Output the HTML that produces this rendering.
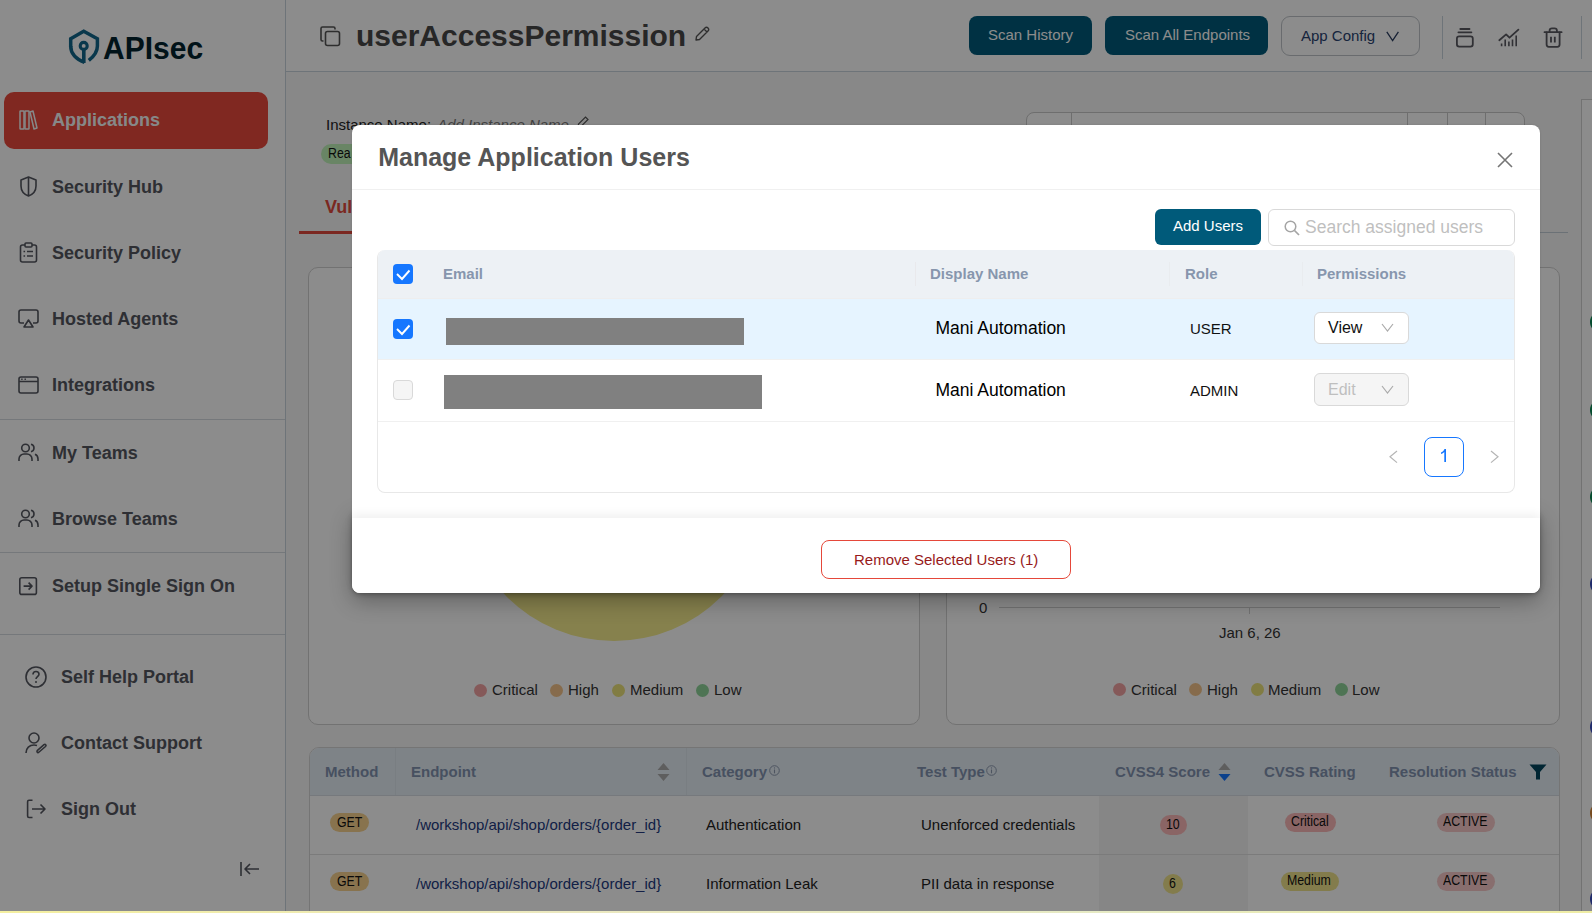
<!DOCTYPE html>
<html><head><meta charset="utf-8">
<style>
*{box-sizing:border-box;margin:0;padding:0}
html,body{width:1592px;height:913px;overflow:hidden;background:#f8f8f8;font-family:"Liberation Sans",sans-serif}
.a{position:absolute}
.t{position:absolute;line-height:1;white-space:nowrap}
.b{font-weight:bold}
svg{position:absolute;overflow:visible}
#sidebar{left:0;top:0;width:286px;height:913px;background:#fff;border-right:1px solid #c9d3dc}
#header{left:286px;top:0;width:1306px;height:72px;background:#fff;border-bottom:1px solid #c9d3dc}
.nav{color:#545760;font-size:18px;font-weight:bold}
.hr{position:absolute;height:1px;background:#d6dbe0}
.btn{position:absolute;border-radius:8px;background:#005a7a;color:#fff;font-size:15px}
.card{position:absolute;border:1px solid #cfcfcf;border-radius:10px;background:#fff}
.leg{font-size:15px;color:#333}
.dot{position:absolute;width:13px;height:13px;border-radius:50%}
#overlay{left:0;top:0;width:1592px;height:911px;background:rgba(0,0,0,0.45)}
#modal{left:352px;top:125px;width:1188px;height:468px;background:#fff;border-radius:8px;overflow:hidden;
 box-shadow:0 0 2px rgba(0,0,0,.15)}
.th{font-size:15px;font-weight:bold;color:#8796ad}
.cb{position:absolute;width:20px;height:20px;border-radius:4px;background:#1677ff}
.sx{transform:scaleX(0.88);transform-origin:0 0}
.cell{font-size:17.5px;color:#111}
</style></head><body>

<!-- ============ BACKGROUND PAGE ============ -->
<div id="sidebar" class="a">
  <!-- logo -->
  <svg style="left:62px;top:24px" width="44" height="44" viewBox="62 24 44 44">
    <path d="M70.7 47 V38.8 L83.7 31.2 L97.4 38.8 V46 C97.4 51.5 94.5 56 88.8 60.3" fill="none" stroke="#12668a" stroke-width="3.5" stroke-linejoin="miter"/>
    <path d="M70.7 46 C70.7 53.5 76 59 84.5 62.5" fill="none" stroke="#12668a" stroke-width="3.5"/>
    <circle cx="83.7" cy="45.9" r="3.5" fill="none" stroke="#12668a" stroke-width="3.1"/>
    <path d="M83.8 49 V63" stroke="#12668a" stroke-width="3.6"/>
  </svg>
  <div class="t b" style="left:103px;top:33.5px;font-size:30px;color:#03232f;transform:scaleY(1.06);transform-origin:0 25.5px">APIsec</div>

  <div class="a" style="left:4px;top:92px;width:264px;height:57px;border-radius:10px;background:#e9493c"></div>
  <svg style="left:19px;top:110px" width="19" height="20" viewBox="0 0 19 20">
    <rect x="1" y="1" width="4" height="18" rx="0.5" fill="none" stroke="#f4f8f8" stroke-width="1.5"/>
    <rect x="6" y="1" width="4" height="18" rx="0.5" fill="none" stroke="#f4f8f8" stroke-width="1.5"/>
    <path d="M11 2 L14 1 L18 18 L15 19 Z" fill="none" stroke="#f4f8f8" stroke-width="1.5" stroke-linejoin="round"/>
  </svg>
  <div class="t nav" style="left:52px;top:111px;color:#f4f8f8">Applications</div>

  <svg style="left:20px;top:176px" width="17" height="21" viewBox="0 0 17 21">
    <path d="M8.5 1 L16 4 V10 C16 15 12.5 18.5 8.5 20 C4.5 18.5 1 15 1 10 V4 Z M8.5 1 V20" fill="none" stroke="#545760" stroke-width="1.6" stroke-linejoin="round"/>
  </svg>
  <div class="t nav" style="left:52px;top:177.5px">Security Hub</div>

  <svg style="left:19px;top:242px" width="19" height="21" viewBox="0 0 19 21">
    <rect x="1.5" y="3" width="16" height="17" rx="2" fill="none" stroke="#545760" stroke-width="1.6"/>
    <rect x="6" y="1" width="7" height="4" rx="1" fill="#fff" stroke="#545760" stroke-width="1.6"/>
    <path d="M4.5 9.5h1.6M8 9.5h6M4.5 14h1.6M8 14h6" stroke="#545760" stroke-width="1.6"/>
  </svg>
  <div class="t nav" style="left:52px;top:243.5px">Security Policy</div>

  <svg style="left:18px;top:309px" width="21" height="19" viewBox="0 0 21 19">
    <path d="M6 14 H3 C2 14 1 13 1 12 V3 C1 2 2 1 3 1 H18 C19 1 20 2 20 3 V12 C20 13 19 14 18 14 H15" fill="none" stroke="#545760" stroke-width="1.6"/>
    <path d="M10.5 11 L15 18 H6 Z" fill="none" stroke="#545760" stroke-width="1.6" stroke-linejoin="round"/>
  </svg>
  <div class="t nav" style="left:52px;top:309.5px">Hosted Agents</div>

  <svg style="left:18px;top:376px" width="21" height="18" viewBox="0 0 21 18">
    <rect x="1" y="1" width="19" height="16" rx="2" fill="none" stroke="#545760" stroke-width="1.6"/>
    <path d="M1 5.5 H20 M3.2 3.3 H4.6 M6.5 3.3 H7.9" stroke="#545760" stroke-width="1.6"/>
  </svg>
  <div class="t nav" style="left:52px;top:375.5px">Integrations</div>
  <div class="hr" style="left:0;top:418.5px;width:285px"></div>

  <svg style="left:18px;top:443px" width="21" height="19" viewBox="0 0 21 19">
    <circle cx="7.5" cy="5" r="3.8" fill="none" stroke="#545760" stroke-width="1.6"/>
    <path d="M1 18 V16 C1 13 3.5 11 6 11 H9 C11.5 11 14 13 14 16 V18" fill="none" stroke="#545760" stroke-width="1.6"/>
    <path d="M13 1.3 C15 1.8 16 3.5 16 5 C16 6.5 15 8.2 13 8.7 M17 11.2 C19 12 20 14 20 16 V18" fill="none" stroke="#545760" stroke-width="1.6"/>
  </svg>
  <div class="t nav" style="left:52px;top:444px">My Teams</div>

  <svg style="left:18px;top:509px" width="21" height="19" viewBox="0 0 21 19">
    <circle cx="7.5" cy="5" r="3.8" fill="none" stroke="#545760" stroke-width="1.6"/>
    <path d="M1 18 V16 C1 13 3.5 11 6 11 H9 C11.5 11 14 13 14 16 V18" fill="none" stroke="#545760" stroke-width="1.6"/>
    <path d="M13 1.3 C15 1.8 16 3.5 16 5 C16 6.5 15 8.2 13 8.7 M17 11.2 C19 12 20 14 20 16 V18" fill="none" stroke="#545760" stroke-width="1.6"/>
  </svg>
  <div class="t nav" style="left:52px;top:510px">Browse Teams</div>
  <div class="hr" style="left:0;top:551.5px;width:285px"></div>

  <svg style="left:19px;top:576.5px" width="20" height="20" viewBox="0 0 20 20">
    <rect x="0.8" y="0.8" width="16.6" height="16.6" rx="2" fill="none" stroke="#545760" stroke-width="1.6"/>
    <path d="M4.6 9.1 H13 M9.6 5.6 L13 9.1 L9.6 12.6" fill="none" stroke="#545760" stroke-width="1.6" stroke-linejoin="round"/>
  </svg>
  <div class="t nav" style="left:52px;top:576.5px">Setup Single Sign On</div>
  <div class="hr" style="left:0;top:633.5px;width:285px"></div>

  <svg style="left:25px;top:666px" width="22" height="22" viewBox="0 0 22 22">
    <circle cx="11" cy="11" r="10" fill="none" stroke="#545760" stroke-width="1.6"/>
    <path d="M8 8.5 C8 6.5 9.5 5.5 11 5.5 C12.8 5.5 14 6.7 14 8.3 C14 10.5 11 10.8 11 13" fill="none" stroke="#545760" stroke-width="1.6"/>
    <circle cx="11" cy="16" r="1" fill="#545760"/>
  </svg>
  <div class="t nav" style="left:61px;top:668px">Self Help Portal</div>

  <svg style="left:25px;top:732px" width="23" height="22" viewBox="0 0 23 22">
    <circle cx="9" cy="6" r="5" fill="none" stroke="#545760" stroke-width="1.6"/>
    <path d="M1 21 C1 16 4.5 13 9 13 C10 13 11 13.2 12 13.5" fill="none" stroke="#545760" stroke-width="1.6"/>
    <path d="M13.5 20.5 L20.5 14.5 C21.8 13.3 20.3 11.6 19 12.7 L12.2 18.6 C11.6 19.6 12.3 20.9 13.5 20.5 Z" fill="none" stroke="#545760" stroke-width="1.6" stroke-linejoin="round"/>
  </svg>
  <div class="t nav" style="left:61px;top:734px">Contact Support</div>

  <svg style="left:25px;top:799px" width="22" height="20" viewBox="0 0 22 20">
    <path d="M7.5 1.3 H4 C3 1.3 2.6 1.8 2.6 2.8 V17 C2.6 18 3 18.5 4 18.5 H7.5" fill="none" stroke="#545760" stroke-width="1.6"/>
    <path d="M7 10 H20 M15.5 5.5 L20 10 L15.5 14.5" fill="none" stroke="#545760" stroke-width="1.6" stroke-linejoin="round"/>
  </svg>
  <div class="t nav" style="left:61px;top:800px">Sign Out</div>

  <svg style="left:240px;top:861px" width="20" height="16" viewBox="0 0 20 16">
    <path d="M1 1 V15 M19 8 H5 M10 3 L5 8 L10 13" fill="none" stroke="#545760" stroke-width="1.6" stroke-linejoin="round"/>
  </svg>
</div>

<div id="header" class="a">
</div>
<!-- header content (absolute page coords) -->
<svg style="left:320px;top:26px" width="21" height="21" viewBox="0 0 21 21">
  <rect x="5.5" y="5.5" width="14" height="14" rx="2" fill="none" stroke="#555" stroke-width="1.6"/>
  <path d="M3.5 15 H2.5 C1.7 15 1 14.3 1 13.5 V2.5 C1 1.7 1.7 1 2.5 1 H13.5 C14.3 1 15 1.7 15 2.5 V3.5" fill="none" stroke="#555" stroke-width="1.6"/>
</svg>
<div class="t b" style="left:356px;top:21px;font-size:30px;color:#474747">userAccessPermission</div>
<svg style="left:695px;top:26px" width="14" height="15" viewBox="0 0 14 15">
  <path d="M1 14 L1.5 10.5 L10 2 C11 1 12 1 13 2 C14 3 14 4 13 5 L4.5 13.5 Z M9 3 L12 6" fill="none" stroke="#555" stroke-width="1.4" stroke-linejoin="round"/>
</svg>

<div class="btn" style="left:969px;top:16px;width:123px;height:39px"><div class="t" style="left:19px;top:11px">Scan History</div></div>
<div class="btn" style="left:1105px;top:16px;width:163px;height:39px"><div class="t" style="left:20px;top:11px">Scan All Endpoints</div></div>
<div class="a" style="left:1281px;top:16px;width:139px;height:40px;border:1px solid #bfc4c9;border-radius:9px;background:#fff"></div>
<div class="t" style="left:1301px;top:28px;font-size:15px;color:#2a4270">App Config</div>
<svg style="left:1386px;top:31px" width="14" height="11" viewBox="0 0 14 11"><path d="M0.8 0.8 L6.6 9.6 L12.4 0.8" fill="none" stroke="#2a3d60" stroke-width="1.3"/></svg>
<div class="a" style="left:1442px;top:16px;width:1px;height:43px;background:#c9d3dc"></div>
<svg style="left:1440px;top:20px" width="140" height="40" viewBox="1440 20 140 40">
  <g fill="none" stroke="#5a5a62" stroke-width="1.8" stroke-linecap="round" stroke-linejoin="round">
  <path d="M1460.3 29 H1469.5 M1458.4 32.3 H1471.4"/>
  <rect x="1456.9" y="36.3" width="15.9" height="10.3" rx="2.3"/>
  <path d="M1499.3 40.2 L1506.1 34.4 L1509.5 37.7 L1518.4 29.6"/>
  <path d="M1501.6 43.6 V46.3 M1505.2 39.6 V46.3 M1508.9 41.6 V46.3 M1512.5 39.6 V46.3 M1516.2 35.6 V46.3" stroke-linecap="butt" stroke-width="1.6"/>
  <path d="M1544.5 32.2 H1561.6 M1549.6 32.2 V30.5 C1549.6 29 1550.6 28.4 1552 28.4 H1554.6 C1556 28.4 1556.9 29 1556.9 30.5 V32.2"/>
  <path d="M1546.6 32.5 V44.6 C1546.6 46 1547.4 46.8 1548.8 46.8 H1557.4 C1558.8 46.8 1559.6 46 1559.6 44.6 V32.5"/>
  <path d="M1551 36.8 V42.4 M1554.8 36.8 V42.4" stroke-linecap="butt"/>
  </g>
</svg>
<div class="a" style="left:1581px;top:16px;width:1px;height:43px;background:#c9d3dc"></div>

<!-- content -->
<div class="t" style="left:326px;top:117px;font-size:15px;color:#222">Instance Name: <i style="color:#777;margin-left:2px">Add Instance Name</i></div>
<svg style="left:577px;top:116px" width="12" height="12" viewBox="0 0 12 12"><path d="M1 11 L1.5 8 L8.5 1 L11 3.5 L4 10.5 Z" fill="none" stroke="#555" stroke-width="1.2"/></svg>
<div class="a" style="left:321px;top:144px;width:80px;height:20px;border-radius:10px;background:#bff2b9"></div>
<div class="t sx" style="left:327.5px;top:146px;font-size:14px;color:#111">Rea</div>
<div class="t b" style="left:325px;top:198px;font-size:18px;color:#e04a3c">Vulnerabilities</div>
<div class="a" style="left:299px;top:232px;width:1269px;height:1px;background:#c4ced8"></div>
<div class="a" style="left:299px;top:231px;width:150px;height:3px;background:#e04a3c"></div>
<div class="a" style="left:1026px;top:112px;width:499px;height:40px;border:1px solid #c8c8c8;border-radius:8px;background:#fff"></div>
<div class="a" style="left:1071px;top:112px;width:1px;height:40px;background:#c8c8c8"></div>
<div class="a" style="left:1407px;top:112px;width:1px;height:40px;background:#c8c8c8"></div>
<div class="a" style="left:1447px;top:112px;width:1px;height:40px;background:#c8c8c8"></div>
<div class="a" style="left:1485px;top:112px;width:1px;height:40px;background:#c8c8c8"></div>

<div class="card" style="left:308px;top:267px;width:612px;height:458px"></div>
<div class="a" style="left:462px;top:337px;width:304px;height:304px;border-radius:50%;background:#f4eb8c"></div>
<div class="dot" style="left:474px;top:684px;background:#f3a3a3"></div>
<div class="t leg" style="left:492px;top:682px">Critical</div>
<div class="dot" style="left:550px;top:684px;background:#f5c48a"></div>
<div class="t leg" style="left:568px;top:682px">High</div>
<div class="dot" style="left:612px;top:684px;background:#ebe27a"></div>
<div class="t leg" style="left:630px;top:682px">Medium</div>
<div class="dot" style="left:696px;top:684px;background:#8fd49a"></div>
<div class="t leg" style="left:714px;top:682px">Low</div>

<div class="card" style="left:946px;top:267px;width:614px;height:458px"></div>
<div class="t" style="left:979px;top:600px;font-size:15px;color:#333">0</div>
<div class="a" style="left:999px;top:607px;width:501px;height:1px;background:#d0d0d0"></div>
<div class="a" style="left:1249px;top:607px;width:1px;height:7px;background:#d0d0d0"></div>
<div class="t" style="left:1219px;top:625px;font-size:15px;color:#333">Jan 6, 26</div>
<div class="dot" style="left:1113px;top:683px;background:#f3a3a3"></div>
<div class="t leg" style="left:1131px;top:682px">Critical</div>
<div class="dot" style="left:1189px;top:683px;background:#f5c48a"></div>
<div class="t leg" style="left:1207px;top:682px">High</div>
<div class="dot" style="left:1251px;top:683px;background:#ebe27a"></div>
<div class="t leg" style="left:1268px;top:682px">Medium</div>
<div class="dot" style="left:1335px;top:683px;background:#8fd49a"></div>
<div class="t leg" style="left:1352px;top:682px">Low</div>

<!-- bottom table -->
<div class="a" style="left:309px;top:747px;width:1251px;height:180px;border:1px solid #d6d6d6;border-radius:10px;background:#fff;overflow:hidden">
  <div class="a" style="left:0;top:0;width:1251px;height:48px;background:#e6eef6;border-bottom:1px solid #d8dde3"></div>
  <div class="a" style="left:789px;top:48px;width:149px;height:140px;background:#f4f4f4"></div>
  <div class="a" style="left:0;top:106px;width:1251px;height:1px;background:#e0e0e0"></div>
</div>
<div class="t b" style="left:325px;top:764px;font-size:15px;color:#8193b0">Method</div>
<div class="t b" style="left:411px;top:764px;font-size:15px;color:#8193b0">Endpoint</div>
<div class="t b" style="left:702px;top:764px;font-size:15px;color:#8193b0">Category</div>
<div class="t b" style="left:917px;top:764px;font-size:15px;color:#8193b0">Test Type</div>
<div class="t b" style="left:1115px;top:764px;font-size:15px;color:#8193b0">CVSS4 Score</div>
<div class="t b" style="left:1264px;top:764px;font-size:15px;color:#8193b0">CVSS Rating</div>
<div class="t b" style="left:1389px;top:764px;font-size:15px;color:#8193b0">Resolution Status</div>

<div class="a" style="left:330px;top:813px;width:39px;height:19px;border-radius:10px;background:#f7d28f"></div>
<div class="t sx" style="left:337px;top:815px;font-size:14px;color:#111">GET</div>
<div class="t" style="left:416px;top:817px;font-size:15px;color:#233a80">/workshop/api/shop/orders/{order_id}</div>
<div class="t" style="left:706px;top:817px;font-size:15px;color:#222">Authentication</div>
<div class="t" style="left:921px;top:817px;font-size:15px;color:#222">Unenforced credentials</div>

<div class="a" style="left:330px;top:872px;width:39px;height:19px;border-radius:10px;background:#f7d28f"></div>
<div class="t sx" style="left:337px;top:874px;font-size:14px;color:#111">GET</div>
<div class="t" style="left:416px;top:876px;font-size:15px;color:#233a80">/workshop/api/shop/orders/{order_id}</div>
<div class="t" style="left:706px;top:876px;font-size:15px;color:#222">Information Leak</div>
<div class="t" style="left:921px;top:876px;font-size:15px;color:#222">PII data in response</div>

<div class="a" style="left:395px;top:748px;width:1px;height:47px;background:#dde5ed"></div>
<div class="a" style="left:686px;top:748px;width:1px;height:47px;background:#dde5ed"></div>
<svg style="left:657px;top:763px" width="13" height="18" viewBox="0 0 13 18"><path d="M6.5 0 L12.5 7 H0.5 Z M0.5 11 H12.5 L6.5 18 Z" fill="#acacac"/></svg>
<svg style="left:769px;top:765px" width="11" height="11" viewBox="0 0 11 11"><circle cx="5.5" cy="5.5" r="4.8" fill="none" stroke="#8d9bb0" stroke-width="1"/><path d="M5.5 4.5 V8.3" stroke="#8d9bb0" stroke-width="1.1"/><circle cx="5.5" cy="2.9" r="0.6" fill="#8d9bb0"/></svg>
<svg style="left:986px;top:765px" width="11" height="11" viewBox="0 0 11 11"><circle cx="5.5" cy="5.5" r="4.8" fill="none" stroke="#8d9bb0" stroke-width="1"/><path d="M5.5 4.5 V8.3" stroke="#8d9bb0" stroke-width="1.1"/><circle cx="5.5" cy="2.9" r="0.6" fill="#8d9bb0"/></svg>
<svg style="left:1218px;top:763px" width="13" height="18" viewBox="0 0 13 18"><path d="M6.5 0 L12.5 7 H0.5 Z" fill="#acacac"/><path d="M0.5 11 H12.5 L6.5 18 Z" fill="#1677ff"/></svg>
<svg style="left:1529px;top:764px" width="18" height="16" viewBox="0 0 18 16"><path d="M0.5 0.5 H17.5 L11 8 V15.5 H7 V8 Z" fill="#02465e"/></svg>

<div class="a" style="left:1160px;top:815px;width:27px;height:20px;border-radius:10px;background:#fbb9b9"></div>
<div class="t sx" style="left:1166px;top:817px;font-size:14px;color:#111">10</div>
<div class="a" style="left:1285px;top:813px;width:51px;height:19px;border-radius:10px;background:#fbb9b9"></div>
<div class="t sx" style="left:1291px;top:814px;font-size:14px;color:#111">Critical</div>
<div class="a" style="left:1437px;top:813px;width:58px;height:19px;border-radius:10px;background:#f8c9c9"></div>
<div class="t sx" style="left:1443px;top:814px;font-size:14px;color:#111">ACTIVE</div>

<div class="a" style="left:1163px;top:874px;width:20px;height:20px;border-radius:10px;background:#eee28a"></div>
<div class="t sx" style="left:1169px;top:876px;font-size:14px;color:#111">6</div>
<div class="a" style="left:1281px;top:872px;width:58px;height:19px;border-radius:10px;background:#eee28a"></div>
<div class="t sx" style="left:1287px;top:873px;font-size:14px;color:#111">Medium</div>
<div class="a" style="left:1437px;top:872px;width:58px;height:19px;border-radius:10px;background:#f8c9c9"></div>
<div class="t sx" style="left:1443px;top:873px;font-size:14px;color:#111">ACTIVE</div>

<div class="a" style="left:1581px;top:99px;width:30px;height:830px;background:#fff;border-left:1px solid #cfcfcf;border-top:1px solid #cfcfcf"></div>
<div class="dot" style="left:1590px;top:311.0px;width:22px;height:22px;background:#0a8a55"></div>
<div class="dot" style="left:1590px;top:399.0px;width:22px;height:22px;background:#0a8a55"></div>
<div class="dot" style="left:1590px;top:486.0px;width:22px;height:22px;background:#0a8a55"></div>
<div class="dot" style="left:1590px;top:573.0px;width:22px;height:22px;background:#3b4fc4"></div>
<div class="dot" style="left:1590px;top:715.5px;width:22px;height:22px;background:#3b4fc4"></div>
<div class="dot" style="left:1590px;top:801.5px;width:22px;height:22px;background:#d98a3a"></div>
<div class="dot" style="left:1590px;top:888.0px;width:22px;height:22px;background:#3b4fc4"></div>

<!-- right panel edge -->


<!-- ============ OVERLAY ============ -->
<div id="overlay" class="a"></div>
<div class="a" style="left:0;top:911px;width:1592px;height:2px;background:linear-gradient(90deg,#f4efa0,#ebe8bf 35%,#e6eac4 70%,#efeda5)"></div>

<!-- ============ MODAL ============ -->
<div class="a" style="left:352px;top:510px;width:1188px;height:83px;border-radius:8px;background:#777;box-shadow:0 2px 5px rgba(0,0,0,.22),0 8px 22px 0 rgba(0,0,0,.3)"></div>
<div id="modal" class="a">
  <div class="t b" style="left:26.2px;top:20px;font-size:25px;color:#555">Manage Application Users</div>
  <svg style="left:1145px;top:27px" width="16" height="16" viewBox="0 0 16 16"><path d="M1 1 L15 15 M15 1 L1 15" stroke="#757575" stroke-width="1.6"/></svg>
  <div class="a" style="left:0;top:64px;width:1188px;height:1px;background:#f0f0f0"></div>
  <!-- toolbar -->
  <div class="a" style="left:803px;top:84px;width:106px;height:36px;border-radius:6px;background:#005a7a"></div>
  <div class="t" style="left:821px;top:93.2px;font-size:15px;color:#fff">Add Users</div>
  <div class="a" style="left:916px;top:84px;width:247px;height:37px;border:1px solid #d9d9d9;border-radius:6px;background:#fff"></div>
  <svg style="left:932px;top:95px" width="16" height="16" viewBox="0 0 16 16"><circle cx="6.5" cy="6.5" r="5.3" fill="none" stroke="#a5a5a5" stroke-width="1.5"/><path d="M10.5 10.5 L15 15" stroke="#a5a5a5" stroke-width="1.7"/></svg>
  <div class="t" style="left:953px;top:94px;font-size:17.5px;color:#bfbfbf">Search assigned users</div>
</div>
<!-- table (page coords) -->
<div class="a" style="left:377px;top:250px;width:1138px;height:243px;border:1px solid #e8e8e8;border-top:none;border-radius:8px;background:#fff;overflow:hidden">
  <div class="a" style="left:-1px;top:0;width:1140px;height:48px;background:#edf1f5"></div>
  <div class="a" style="left:0;top:48px;width:1138px;height:1px;background:#eeeeee"></div>
  <div class="a" style="left:0;top:49px;width:1138px;height:60px;background:#e6f4ff"></div>
  <div class="a" style="left:0;top:109px;width:1138px;height:1px;background:#f0f0f0"></div>
  <div class="a" style="left:0;top:171px;width:1138px;height:1px;background:#f0f0f0"></div>
</div>
<div class="a" style="left:915px;top:262px;width:1px;height:24px;background:#e9e9ec"></div>
<div class="a" style="left:1169px;top:262px;width:1px;height:24px;background:#e9ecef"></div>
<div class="a" style="left:1302px;top:262px;width:1px;height:24px;background:#e9ecef"></div>
<div class="t th" style="left:443px;top:266px">Email</div>
<div class="t th" style="left:930px;top:266px">Display Name</div>
<div class="t th" style="left:1185px;top:266px">Role</div>
<div class="t th" style="left:1317px;top:266px">Permissions</div>

<div class="cb" style="left:393px;top:264px"></div>
<svg style="left:393px;top:264px" width="20" height="20" viewBox="0 0 20 20"><path d="M4 10 L9 15 L16.5 6.5" fill="none" stroke="#fff" stroke-width="1.9"/></svg>
<div class="cb" style="left:393px;top:319px"></div>
<svg style="left:393px;top:319px" width="20" height="20" viewBox="0 0 20 20"><path d="M4 10 L9 15 L16.5 6.5" fill="none" stroke="#fff" stroke-width="1.9"/></svg>
<div class="cb" style="left:393px;top:380px;background:#f5f5f5;border:1px solid #d9d9d9"></div>

<div class="a" style="left:446px;top:318px;width:298px;height:27px;background:#808080"></div>
<div class="a" style="left:444px;top:375px;width:318px;height:34px;background:#808080"></div>

<div class="t cell" style="left:935.5px;top:320px;color:#000">Mani Automation</div>
<div class="t" style="left:1190px;top:321px;font-size:15px;color:#111">USER</div>
<div class="a" style="left:1314px;top:312px;width:95px;height:32px;border:1px solid #d9d9d9;border-radius:6px;background:#fff"></div>
<div class="t" style="left:1328px;top:320px;font-size:16px;color:#111">View</div>
<svg style="left:1381px;top:323px" width="13" height="9" viewBox="0 0 13 9"><path d="M1 1 L6.5 8 L12 1" fill="none" stroke="#aaa" stroke-width="1.2"/></svg>

<div class="t cell" style="left:935.5px;top:382px;color:#000">Mani Automation</div>
<div class="t" style="left:1190px;top:383px;font-size:15px;color:#111">ADMIN</div>
<div class="a" style="left:1314px;top:373px;width:95px;height:33px;border:1px solid #d9d9d9;border-radius:6px;background:#f5f5f5"></div>
<div class="t" style="left:1328px;top:382px;font-size:16px;color:#bfbfbf">Edit</div>
<svg style="left:1381px;top:385px" width="13" height="9" viewBox="0 0 13 9"><path d="M1 1 L6.5 8 L12 1" fill="none" stroke="#aaa" stroke-width="1.2"/></svg>

<svg style="left:1389px;top:449.5px" width="9" height="14" viewBox="0 0 9 14"><path d="M8 1 L1 6.8 L8 12.6" fill="none" stroke="#b5b5b5" stroke-width="1.2"/></svg>
<div class="a" style="left:1424px;top:437px;width:40px;height:40px;border:1px solid #1677ff;border-radius:8px;background:#fff"></div>
<svg style="left:1430px;top:440px" width="30" height="30" viewBox="1430 440 30 30"><path d="M1444.5 449 H1446 V462 H1444.3 V451.9 C1443.5 452.8 1442.3 453.5 1441 454 V452.6 C1442.4 452 1443.8 450.8 1444.5 449 Z" fill="#1677ff"/></svg>
<svg style="left:1489.5px;top:449.5px" width="9" height="14" viewBox="0 0 9 14"><path d="M1 1 L8 6.8 L1 12.6" fill="none" stroke="#b5b5b5" stroke-width="1.2"/></svg>

<!-- footer -->
<div class="a" style="left:352px;top:518px;width:1188px;height:75px;border-radius:0 0 8px 8px;background:#fff;box-shadow:0 -4px 10px rgba(0,0,0,0.06)"></div>
<div class="a" style="left:821px;top:540px;width:250px;height:39px;border:1px solid #e5483a;border-radius:8px;background:#fff"></div>
<div class="t" style="left:854px;top:552px;font-size:15px;color:#971a1a">Remove Selected Users (1)</div>

</body></html>
